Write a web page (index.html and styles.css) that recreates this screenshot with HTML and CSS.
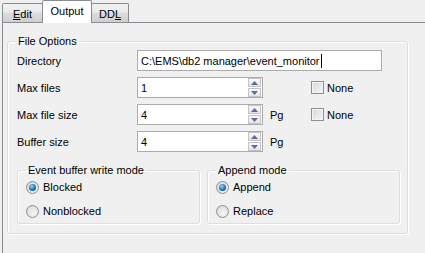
FILE: index.html
```html
<!DOCTYPE html>
<html lang="en">
<head>
  <meta charset="UTF-8">
  <title>Output</title>
  <link rel="stylesheet" href="styles.css">
</head>
<body>
  <div class="tabs">
    <div class="tab tab-edit"><u>E</u>dit</div>
    <div class="tab tab-output active">Output</div>
    <div class="tab tab-ddl">DD<u>L</u></div>
  </div>

  <div class="page">
    <fieldset class="group file-options">
      <legend>File Options</legend>

      <div class="form">
        <div class="label">Directory</div>
        <div class="edit wide">C:\EMS\db2 manager\event_monitor<span class="caret"></span></div>

        <div class="label">Max files</div>
        <div class="edit">1
          <div class="spin">
            <div class="spin-btn"><svg width="7" height="4" viewBox="0 0 7 4"><path d="M0 4h7L3.5 0z" fill="#5b6b9c"/></svg></div>
            <div class="spin-btn"><svg width="7" height="4" viewBox="0 0 7 4"><path d="M0 0h7L3.5 4z" fill="#5b6b9c"/></svg></div>
          </div>
        </div>
        <div class="unit"></div>
        <div class="check"><span class="box"></span>None</div>

        <div class="label">Max file size</div>
        <div class="edit">4
          <div class="spin">
            <div class="spin-btn"><svg width="7" height="4" viewBox="0 0 7 4"><path d="M0 4h7L3.5 0z" fill="#5b6b9c"/></svg></div>
            <div class="spin-btn"><svg width="7" height="4" viewBox="0 0 7 4"><path d="M0 0h7L3.5 4z" fill="#5b6b9c"/></svg></div>
          </div>
        </div>
        <div class="unit">Pg</div>
        <div class="check"><span class="box"></span>None</div>

        <div class="label">Buffer size</div>
        <div class="edit">4
          <div class="spin">
            <div class="spin-btn"><svg width="7" height="4" viewBox="0 0 7 4"><path d="M0 4h7L3.5 0z" fill="#5b6b9c"/></svg></div>
            <div class="spin-btn"><svg width="7" height="4" viewBox="0 0 7 4"><path d="M0 0h7L3.5 4z" fill="#5b6b9c"/></svg></div>
          </div>
        </div>
        <div class="unit">Pg</div>
      </div>

      <div class="subgroups">
        <fieldset class="group sub sub-event">
          <legend>Event buffer write mode</legend>
          <div class="radio-row"><span class="radio checked"><span class="dot"></span></span>Blocked</div>
          <div class="radio-row"><span class="radio"></span>Nonblocked</div>
        </fieldset>
        <fieldset class="group sub sub-append">
          <legend>Append mode</legend>
          <div class="radio-row"><span class="radio checked"><span class="dot"></span></span>Append</div>
          <div class="radio-row"><span class="radio"></span>Replace</div>
        </fieldset>
      </div>
    </fieldset>
  </div>
</body>
</html>
```

FILE: styles.css
```css
body {
  margin: 0;
  background-color: #f0f0f0;
  font-family: "Liberation Sans", Arial, sans-serif;
  font-size: 11px;
  color: #000;
  height: 253px;
  overflow: hidden;
}
.tabs {
  display: flex;
  align-items: flex-end;
  height: 22px;
  padding-left: 2px;
  position: relative;
  z-index: 1;
}
.tab {
  box-sizing: border-box;
  height: 19px;
  border: 1px solid #898c95;
  border-bottom: none;
  border-radius: 2px 2px 0 0;
  background: linear-gradient(#f2f2f2, #ebebeb 45%, #dddddd 50%, #cfcfcf);
  display: flex;
  align-items: center;
  justify-content: center;
  padding-top: 1px;
}
.tab u {
  text-decoration-thickness: 1px;
  text-underline-offset: 1px;
}
.tab-edit {
  width: 41px;
}
.tab-output {
  width: 50px;
  margin-left: -1px;
}
.tab-ddl {
  width: 38px;
  margin-left: -1px;
}
.tab.active {
  height: 23px;
  margin-bottom: -1px;
  background: #fff;
  padding-bottom: 3px;
}
.page {
  box-sizing: border-box;
  margin-left: 2px;
  border-left: 1px solid #898c95;
  border-top: 1px solid #898c95;
  height: 231px;
  padding: 12px 0 0 4px;
}
.group {
  margin: 0;
  border: 1px solid #d5dfe5;
  border-radius: 3px;
  box-shadow: 1px 1px 0 #fff, inset 1px 1px 0 #fff;
  min-width: 0;
}
.group legend {
  padding: 0 2px;
  line-height: 13px;
}
.file-options {
  box-sizing: border-box;
  width: 401px;
  padding: 0 7px 9px 9px;
}
.file-options > legend {
  margin-left: -1px;
}
.form {
  display: grid;
  grid-template-columns: 120px 126px 48px 1fr;
  grid-auto-rows: 21px;
  row-gap: 6px;
  margin-top: 2px;
  align-items: center;
}
.edit {
  box-sizing: border-box;
  height: 21px;
  border: 1px solid #ababab;
  background: #fff;
  display: flex;
  align-items: center;
  padding-left: 3px;
}
.edit.wide {
  grid-column: 2 / 5;
  width: 245px;
}
.caret {
  width: 1px;
  height: 14px;
  background: #000;
  margin-left: 1px;
}
.spin {
  margin-left: auto;
  margin-right: 1px;
  height: 19px;
  display: flex;
  flex-direction: column;
  justify-content: space-between;
}
.spin-btn {
  box-sizing: border-box;
  width: 13px;
  height: 9px;
  border: 1px solid #c4c4c4;
  background: linear-gradient(#fafafa, #e4e4e4);
  display: flex;
  align-items: center;
  justify-content: center;
}
.unit {
  padding-left: 7px;
}
.check {
  display: flex;
  align-items: center;
  gap: 3px;
}
.box {
  box-sizing: border-box;
  width: 13px;
  height: 13px;
  border: 1px solid #8f8f8f;
  background: linear-gradient(135deg, #d8d8d8, #f6f6f6);
  box-shadow: inset 0 0 0 1px #f4f4f4;
}
.subgroups {
  display: flex;
  gap: 7px;
  margin-top: 12px;
}
.sub {
  padding: 0 0 0 8px;
}
.sub legend {
  margin-left: 0;
  margin-bottom: -2px;
}
.sub-event {
  width: 184px;
  box-sizing: border-box;
}
.sub-append {
  width: 194px;
  box-sizing: border-box;
}
.radio-row {
  height: 24px;
  display: flex;
  align-items: center;
  gap: 4px;
}
.radio {
  box-sizing: border-box;
  width: 13px;
  height: 13px;
  border-radius: 50%;
  border: 1px solid #8e8f8f;
  background: radial-gradient(circle at 60% 65%, #f6f6f6, #d4d4d4);
  display: flex;
  align-items: center;
  justify-content: center;
}
.dot {
  width: 7px;
  height: 7px;
  border-radius: 50%;
  background: radial-gradient(circle at 40% 35%, #8fd6ff, #1b74b8 55%, #0c3f74);
}
```
